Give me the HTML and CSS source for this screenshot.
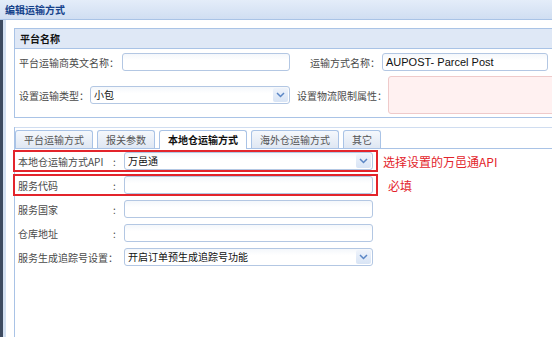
FILE: index.html
```html
<!DOCTYPE html>
<html lang="zh">
<head>
<meta charset="utf-8" />
<title>编辑运输方式</title>
<link rel="stylesheet" href="styles.css">
</head>
<body>
<div class="win">
  <div class="win-title">编辑运输方式</div>
  <div class="win-body">
    <div class="group">
      <div class="group-head">平台名称</div>
      <div class="group-body">
        <div class="line">
          <span class="lbl w103">平台运输商英文名称：</span>
          <span class="field w168"></span>
          <span class="lbl w72 gap20">运输方式名称：</span>
          <span class="field w166"><span class="val latin">AUPOST- Parcel Post</span></span>
        </div>
        <div class="line">
          <span class="lbl w71">设置运输类型：</span>
          <span class="field select w200">
            <span class="val">小包</span>
            <span class="drop"><svg width="9" height="6" viewBox="0 0 9 6"><path d="M1 1l3.5 3.5L8 1" fill="none" stroke="#5b86c5" stroke-width="1.5"/></svg></span>
          </span>
          <span class="lbl w91 gap7">设置物流限制属性：</span>
          <span class="memo"></span>
        </div>
      </div>
    </div>

    <div class="tabs">
      <div class="tab-strip">
        <span class="tab">平台运输方式</span>
        <span class="tab">报关参数</span>
        <span class="tab tab-on">本地仓运输方式</span>
        <span class="tab">海外仓运输方式</span>
        <span class="tab">其它</span>
      </div>
      <div class="tab-body">
        <div class="entry entry-first">
          <div class="box box-marked">
            <span class="name">本地仓运输方式API</span><span class="colon">:</span>
            <span class="field select grow">
              <span class="val">万邑通</span>
              <span class="drop"><svg width="9" height="6" viewBox="0 0 9 6"><path d="M1 1l3.5 3.5L8 1" fill="none" stroke="#5b86c5" stroke-width="1.5"/></svg></span>
            </span>
          </div>
          <span class="note">选择设置的万邑通API</span>
        </div>
        <div class="entry">
          <div class="box box-marked">
            <span class="name">服务代码</span><span class="colon">:</span>
            <span class="field grow"></span>
          </div>
          <span class="note note-far">必填</span>
        </div>
        <div class="entry">
          <div class="box">
            <span class="name">服务国家</span><span class="colon">:</span>
            <span class="field grow"></span>
          </div>
        </div>
        <div class="entry">
          <div class="box">
            <span class="name">仓库地址</span><span class="colon">:</span>
            <span class="field grow"></span>
          </div>
        </div>
        <div class="entry">
          <div class="box">
            <span class="name name-long">服务生成追踪号设置：</span>
            <span class="field select grow">
              <span class="val">开启订单预生成追踪号功能</span>
              <span class="drop"><svg width="9" height="6" viewBox="0 0 9 6"><path d="M1 1l3.5 3.5L8 1" fill="none" stroke="#5b86c5" stroke-width="1.5"/></svg></span>
            </span>
          </div>
        </div>
      </div>
    </div>
  </div>
</div>
</body>
</html>
```

FILE: styles.css
```css
html,
body {
  margin: 0;
  padding: 0;
  overflow: hidden;
}

body {
  font-family: "Noto Sans CJK SC", "Liberation Sans", sans-serif;
  font-size: 10px;
  color: #4a4a4a;
  background-color: #fff;
}

.win {
  width: 552px;
  height: 337px;
  display: flex;
  flex-direction: column;
  overflow: hidden;
}

.win-title {
  height: 19px;
  line-height: 19px;
  padding-left: 5px;
  font-weight: bold;
  color: #15428b;
  background: linear-gradient(#e4edf9, #d0def2);
  border-bottom: 1px solid #a9c3e6;
}

.win-body {
  flex: 1;
  display: flex;
  flex-direction: column;
  padding: 8px 0 0 11px;
  margin-right: -40px;
  border-left: 3px solid #3e4b60;
  box-shadow: inset 3px 0 #d3e0f1;
}

/* 平台名称 */
.group {
  border: 1px solid #a9c3e6;
}

.group-head {
  height: 19px;
  line-height: 19px;
  padding-left: 5px;
  font-weight: bold;
  color: #111;
  background-color: #dfe8f6;
  border-bottom: 1px solid #a9c3e6;
}

.group-body {
  padding: 4px 0 3px 4px;
}

.line {
  display: flex;
  align-items: center;
}

.line + .line {
  margin-top: 5px;
}

.lbl {
  flex-shrink: 0;
  white-space: nowrap;
}

.w71 { width: 71px; }
.w72 { width: 72px; }
.w91 { width: 91px; }
.w103 { width: 103px; }
.w166 { width: 166px; }
.w168 { width: 168px; }
.w200 { width: 200px; }
.gap7 { margin-left: 7px; }
.gap20 { margin-left: 20px; }

.field {
  flex-shrink: 0;
  display: flex;
  align-items: center;
  box-sizing: border-box;
  height: 18px;
  border: 1px solid #b3c7e3;
  border-radius: 3px;
  background: linear-gradient(#f4f7fb, #fff 40%);
}

.grow {
  flex: 1;
}

.val {
  flex: 1;
  padding-left: 3px;
  line-height: 16px;
  color: #111;
  white-space: nowrap;
}

.latin {
  font-family: "Liberation Sans", Arial, sans-serif;
  font-size: 11px;
}

.drop {
  width: 15px;
  height: 14px;
  margin-right: 1px;
  display: flex;
  align-items: center;
  justify-content: center;
  border-radius: 2px;
  background: linear-gradient(#eef3fb, #d8e4f5);
}

.memo {
  flex-shrink: 0;
  width: 200px;
  height: 38px;
  box-sizing: border-box;
  border: 1px solid #efcaca;
  border-radius: 3px;
  background-color: #fff1f1;
}

/* tabs */
.tabs {
  flex: 1;
  margin-top: 9px;
  display: flex;
  flex-direction: column;
  border-left: 1px solid #a9c3e6;
}

.tab-strip {
  display: flex;
  align-items: flex-start;
  gap: 4px;
  padding-top: 2px;
  border-top: 1px solid #d0ddf0;
  border-bottom: 1px solid #a9c3e6;
}

.tab {
  height: 18px;
  box-sizing: border-box;
  padding: 0 8px;
  line-height: 17px;
  border: 1px solid #a9c3e6;
  border-bottom: none;
  border-radius: 3px 3px 0 0;
  background: linear-gradient(#f5f8fc, #dfe7f3);
  color: #555;
  white-space: nowrap;
}

.tab-on {
  height: 19px;
  margin-bottom: -1px;
  background: #fff;
  font-weight: bold;
  color: #111;
}

.tab-body {
  padding-top: 1px;
}

.entry {
  display: flex;
  align-items: center;
  margin-left: -2px;
}

.entry + .entry {
  margin-top: 2px;
}

.entry-first {
  margin-bottom: 2px;
}

.box {
  flex-shrink: 0;
  width: 365px;
  height: 22px;
  box-sizing: border-box;
  padding: 0 3px;
  display: flex;
  align-items: center;
  border: 2px solid transparent;
}

.box-marked {
  border-color: #e3242b;
}

.name {
  width: 95px;
  white-space: nowrap;
}

.name-long {
  width: 106px;
}

.colon {
  width: 11px;
}

.note {
  margin-left: 5px;
  font-size: 12px;
  color: #e3242b;
  white-space: nowrap;
}

.note-far {
  margin-left: 10px;
}
```
